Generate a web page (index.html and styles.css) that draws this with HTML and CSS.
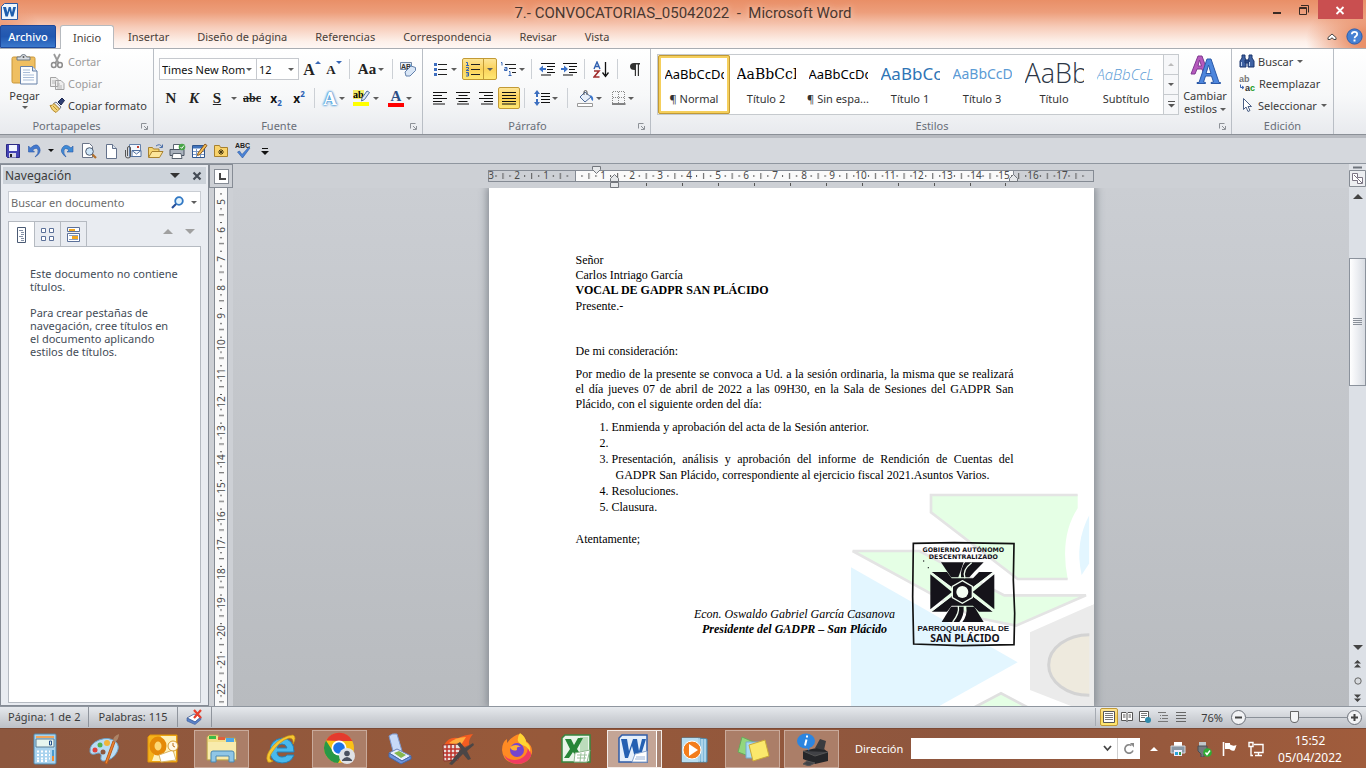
FILE: index.html
```html
<!DOCTYPE html>
<html lang="es">
<head>
<meta charset="utf-8">
<title>7.- CONVOCATORIAS_05042022 - Microsoft Word</title>
<link rel="stylesheet" href="styles.css">
</head>
<body>
<header class="frame">
  <div class="titlebar">
    <svg class="app-icon" width="17" height="17" viewBox="0 0 17 17"><path d="M3.500.5H16.500V16.500H.5V3.500z" fill="#eef6fd" stroke="#2a5ba5"/><path d="M2 4l2.500 9.500h2.300l1.700-6 1.600 6h2.300L15 4h-2.800l-1.200 5.500L9.800 4H7.700L6.400 9.500 5 4z" fill="#1f5fae"/></svg>
    <h1>7.- CONVOCATORIAS_05042022&nbsp; -&nbsp; Microsoft Word</h1>
    <div class="window-buttons">
      <button aria-label="Minimizar"><svg width="10" height="18"><path d="M1 11h8v2H1z" fill="#3a2b25"/></svg></button>
      <button aria-label="Restaurar"><svg width="12" height="18"><path d="M1.500 6.500h7v7h-7zM1 7.500h8M3 4.500h7.500v7" fill="none" stroke="#3a2b25"/></svg></button>
      <button class="close" aria-label="Cerrar"><svg width="10" height="18"><path d="M1.500 6l7 7M8.500 6l-7 7" stroke="#fff" stroke-width="1.800"/></svg></button>
    </div>
  </div>
  <nav class="tabs">
    <button class="file-tab">Archivo</button>
    <button class="active">Inicio</button>
    <button>Insertar</button>
    <button>Diseño de página</button>
    <button>Referencias</button>
    <button>Correspondencia</button>
    <button>Revisar</button>
    <button>Vista</button>
    <span class="tab-tools">
      <button aria-label="Minimizar la cinta"><svg width="10" height="8"><path d="M1 4.500L5 1l4 3.500v2H7L5 4.800 3 6.500H1z" fill="#fff" stroke="#444"/></svg></button>
      <button aria-label="Ayuda"><svg width="17" height="17"><circle cx="8.500" cy="8.500" r="7.600" fill="#4580d2" stroke="#2a5db0"/><path d="M5.800 6.200q.2-2.400 2.700-2.400t2.700 2.200q0 1.300-1.400 2.200-1.200.7-1.200 2" fill="none" stroke="#fff" stroke-width="1.800"/><path d="M7.500 11.500h2v2h-2z" fill="#fff"/></svg></button>
    </span>
  </nav>
</header>

<section class="ribbon" aria-label="Cinta de opciones">
  <div class="group clipboard">
    <div class="group-body">
      <button class="big paste"><svg width="27" height="31" viewBox="0 0 27 31"><rect x="1" y="3" width="23" height="26" rx="1.500" fill="#efbf62" stroke="#c99638"/><path d="M6 6V3h3.500q.5-2.500 3-2.500t3 2.500H19v3z" fill="#d9dde2" stroke="#6d7884"/><circle cx="12.500" cy="3" r="1" fill="#555"/><path d="M9.500 12.500h12l4.500 4.500v13H9.500z" fill="#fbfdff" stroke="#6781a8"/><path d="M21.500 12.500V17H26" fill="#dce6f2" stroke="#6781a8"/><path d="M12 16h7M12 18.500h7M12 21h11M12 23.500h11M12 26h11" stroke="#a9bdd8"/></svg><span>Pegar</span><i class="caret"></i></button>
      <div class="stack">
        <button class="line disabled"><svg width="16" height="16"><path d="M5 1l4.500 9M11 1L6.500 10" stroke="#9a9a9a" stroke-width="1.800"/><ellipse cx="4.800" cy="12" rx="2.300" ry="2.500" fill="none" stroke="#8c8c8c" stroke-width="1.500"/><ellipse cx="11" cy="12" rx="2.300" ry="2.500" fill="none" stroke="#8c8c8c" stroke-width="1.500"/></svg>Cortar</button>
        <button class="line disabled"><svg width="16" height="16"><path d="M1.500 2.500H7l2 2v7H1.500zM6.500 5.500H12l3 3v6H6.500z" fill="#eee" stroke="#a3a3a3"/><path d="M3 6h4M3 8h3M8 9h3M8 11h5M8 13h5" stroke="#b5b5b5"/></svg>Copiar</button>
        <button class="line"><svg width="16" height="16"><path d="M9 5l4-4 2.500 2.500L12 8z" fill="#2f3f73" stroke="#1c2850"/><path d="M7 5l5 5-1.500 2-6-5.500z" fill="#e9e9ee" stroke="#6d7586"/><path d="M5 6.500l5.500 5.500L7 15.500Q3 14 1 8.500 3.500 9 5 6.500z" fill="#f4d67c" stroke="#b68a2e"/><path d="M4 9l4 4" stroke="#b68a2e"/></svg>Copiar formato</button>
      </div>
    </div>
    <div class="group-label">Portapapeles<svg class="launcher" width="7" height="7"><path d="M.5 5.500v-5h5M3 3l3 3M6.500 3v3.500H3" fill="none" stroke="#8d9197"/></svg></div>
  </div>

  <div class="group font">
    <div class="group-body rows">
      <div class="row">
        <label class="combo family"><select aria-label="Fuente"><option>Times New Rom</option></select><i class="caret"></i></label>
        <label class="combo size"><select aria-label="Tamaño de fuente"><option>12</option></select><i class="caret"></i></label>
        <button class="w22 grow" aria-label="Aumentar fuente"><b class="serif big-a">A</b><i class="mark-up"></i></button>
        <button class="w22 grow" aria-label="Reducir fuente"><b class="serif small-a">A</b><i class="mark-down"></i></button>
        <i class="sep"></i>
        <button class="w34" aria-label="Cambiar mayúsculas"><b class="serif">Aa</b><i class="caret"></i></button>
        <i class="sep"></i>
        <button class="w22" aria-label="Borrar formato"><svg width="18" height="18"><path d="M1.500 2.500h11v7h-11z" fill="#e9eef5" stroke="#7489a8"/><text x="2" y="9" class="tiny-a">AB</text><path d="M6 12l6-6 4.500 1.500v3L11 16H7z" fill="#d9e6f6" stroke="#6280ab"/></svg></button>
      </div>
      <div class="row second">
        <button class="w22" aria-label="Negrita"><b class="serif">N</b></button>
        <button class="w24" aria-label="Cursiva"><b class="serif ital">K</b></button>
        <button class="w22" aria-label="Subrayado"><b class="serif under">S</b></button>
        <button class="w12" aria-label="Opciones de subrayado"><i class="caret"></i></button>
        <button class="w24" aria-label="Tachado"><b class="serif strike">abc</b></button>
        <button class="w24 tight" aria-label="Subíndice"><b class="script-x">x</b><span class="low">2</span></button>
        <button class="w22 tight" aria-label="Superíndice"><b class="script-x">x</b><span class="high">2</span></button>
        <i class="sep"></i>
        <button class="w30" aria-label="Efectos de texto"><b class="serif glow">A</b><i class="caret"></i></button>
        <button class="w34" aria-label="Resaltado"><svg width="18" height="18"><path d="M0 1h11v9H0z" fill="#f4ee67"/><text x="0" y="9" class="mark-ab">ab</text><path d="M9 9l5-7 2.500 1.500-5 7-3 1.500z" fill="#dbe7f5" stroke="#4f719f"/><path d="M0 13h16v4H0z" fill="#ff0"/></svg><i class="caret"></i></button>
        <button class="w34" aria-label="Color de fuente"><b class="serif font-color">A</b><i class="caret"></i></button>
      </div>
    </div>
    <div class="group-label">Fuente<svg class="launcher" width="7" height="7"><path d="M.5 5.500v-5h5M3 3l3 3M6.500 3v3.500H3" fill="none" stroke="#8d9197"/></svg></div>
  </div>

  <div class="group paragraph">
    <div class="group-body rows">
      <div class="row">
        <button class="w34" aria-label="Viñetas"><svg width="16" height="16"><path d="M5 3.500h9M5 8.500h9M5 13.500h9" stroke="#222"/><path d="M1 2h3v3H1zM1 7h3v3H1zM1 12h3v3H1z" fill="#3f6fc0"/></svg><i class="caret"></i></button>
        <span class="split on"><button aria-label="Numeración"><svg width="16" height="16"><path d="M6 3.500h9M6 8.500h9M6 13.500h9" stroke="#222"/><path d="M1 1.500h1.500v3M1 4.500h3M1 6.500h2.500v1.500L1 9.500h3M1 11.500h2.500v3.500H1M1.500 13h2" fill="none" stroke="#3565b5"/></svg></button><button aria-label="Opciones de numeración"><i class="caret"></i></button></span>
        <button class="w30" aria-label="Lista multinivel"><svg width="17" height="16"><path d="M5 3.500h11M9 7.500h7M12 11.500h4" stroke="#222"/><path d="M1 1.500h1v3M4.500 6.500h2.500v3H4.500v-1.500H7M9 10.500h1v4M8.500 14.500h3" fill="none" stroke="#3565b5"/></svg><i class="caret"></i></button>
        <i class="sep"></i>
        <button class="w22" aria-label="Disminuir sangría"><svg width="16" height="14"><path d="M2 1.500h14M8 4.500h8M8 7.500h6M8 10.500h8M2 13h10" stroke="#111" stroke-width="1.200"/><path d="M0 7l4-3.500v2.500h3v2H4v2.500z" fill="#3c72c8"/></svg></button>
        <button class="w22" aria-label="Aumentar sangría"><svg width="16" height="14"><path d="M2 1.500h14M8 4.500h8M8 7.500h6M8 10.500h8M2 13h10" stroke="#111" stroke-width="1.200"/><path d="M7 7L3 3.500v2.500H0v2h3v2.500z" fill="#3c72c8"/></svg></button>
        <i class="sep"></i>
        <button class="w24" aria-label="Ordenar"><svg width="16" height="17"><path d="M1 8L4 1l3 7M2 5.500h4" fill="none" stroke="#2f5fb0" stroke-width="1.400"/><path d="M1 10h5l-5 6h5.500" fill="none" stroke="#a02c2c" stroke-width="1.600"/><path d="M12.500 1v13M9.500 11.500l3 4 3-4" fill="none" stroke="#111" stroke-width="1.300"/></svg></button>
        <i class="sep"></i>
        <button class="w24" aria-label="Mostrar todo"><svg width="11" height="13"><path d="M5 0h6v1.500H10V13H8.800V1.500H7V13H5.800V7Q1 7 1 3.500T5 0z" fill="#333"/></svg></button>
      </div>
      <div class="row">
        <button class="w24" aria-label="Alinear a la izquierda"><svg width="14" height="14"><path d="M0 1.500h14M0 4.500h9M0 7.500h14M0 10.500h9M0 13h12" stroke="#111" stroke-width="1.200"/></svg></button>
        <button class="w22" aria-label="Centrar"><svg width="14" height="14"><path d="M0 1.500h14M2.500 4.500h9M0 7.500h14M2.500 10.500h9M1 13h12" stroke="#111" stroke-width="1.200"/></svg></button>
        <button class="w24" aria-label="Alinear a la derecha"><svg width="14" height="14"><path d="M0 1.500h14M5 4.500h9M0 7.500h14M5 10.500h9M2 13h12" stroke="#111" stroke-width="1.200"/></svg></button>
        <button class="w22 on" aria-label="Justificar"><svg width="14" height="14"><path d="M0 1.500h14M0 4.500h14M0 7.500h14M0 10.500h14M0 13h14" stroke="#111" stroke-width="1.200"/></svg></button>
        <i class="sep"></i>
        <button class="w34" aria-label="Interlineado"><svg width="16" height="16"><path d="M7 3.500h9M7 6.500h9M7 9.500h9M7 12.500h9" stroke="#111"/><path d="M3 0l3 4H4v8h2l-3 4-3-4h2V4H0z" fill="#3c6fc0"/><path d="M2 7h2v2H2z" fill="#fff"/></svg><i class="caret"></i></button>
        <i class="sep"></i>
        <button class="w34" aria-label="Sombreado"><svg width="17" height="17"><path d="M3 7l5-5 6 5-6 5z" fill="#e8f0fa" stroke="#4a6898"/><path d="M7 5V2q0-1.500 1.500-1.500T10 2v3" fill="none" stroke="#555"/><path d="M13 5q4 1 3 6-2-1-2.500-4z" fill="#3c78cf"/><path d="M.5 13.500h15v3H.5z" fill="#fff" stroke="#999"/></svg><i class="caret"></i></button>
        <button class="w34" aria-label="Bordes"><svg width="14" height="14"><path d="M.5 12V.5h12V12M6.500 1v11M1 6.500h12" fill="none" stroke="#888" stroke-dasharray="1 1"/><path d="M0 13h13.500" stroke="#111"/></svg><i class="caret"></i></button>
      </div>
    </div>
    <div class="group-label">Párrafo<svg class="launcher" width="7" height="7"><path d="M.5 5.500v-5h5M3 3l3 3M6.500 3v3.500H3" fill="none" stroke="#8d9197"/></svg></div>
  </div>

  <div class="group styles">
    <div class="group-body">
      <div class="gallery">
        <button class="style on"><span class="sample">AaBbCcDc</span><span>¶ Normal</span></button>
        <button class="style"><span class="sample t2">AaBbCcI</span><span>Título 2</span></button>
        <button class="style"><span class="sample">AaBbCcDc</span><span>¶ Sin espa...</span></button>
        <button class="style"><span class="sample t1">AaBbCc</span><span>Título 1</span></button>
        <button class="style"><span class="sample t3">AaBbCcD</span><span>Título 3</span></button>
        <button class="style"><span class="sample tt">AaBb</span><span>Título</span></button>
        <button class="style"><span class="sample st">AaBbCcL</span><span>Subtítulo</span></button>
        <div class="gallery-scroll">
          <button aria-label="Subir"><i class="caret up faint"></i></button>
          <button aria-label="Bajar"><i class="caret"></i></button>
          <button aria-label="Más"><svg width="7" height="7"><path d="M0 .5h7" stroke="#555"/><path d="M0 3h7L3.500 6.500z" fill="#555"/></svg></button>
        </div>
      </div>
      <button class="big change"><svg width="31" height="29" viewBox="0 0 31 29"><path d="M1 19L8 1h4l5 14-3 4-2-5H7l-2 5zM8 11h3.500L9.500 5z" fill="#b659bd" stroke="#7f3a90"/><path d="M7 27.500h2L17 4h4l8 23.500h1.500V28.500H21v-1l2.500-.5-2-6h-6l-2 6 2 .5v1H7zM16 18.500h5L18.500 10z" fill="#4d86dd" stroke="#2c5aa8"/></svg><span>Cambiar</span><span>estilos <i class="caret"></i></span></button>
    </div>
    <div class="group-label">Estilos<svg class="launcher" width="7" height="7"><path d="M.5 5.500v-5h5M3 3l3 3M6.500 3v3.500H3" fill="none" stroke="#8d9197"/></svg></div>
  </div>

  <div class="group editing">
    <div class="group-body stack">
      <button class="line"><svg width="16" height="16"><path d="M3 2h3v3l1 2v7H1V8l2-3zM10 2h3v3l2 3v6H9V7l1-2zM6 7h4v3H6z" fill="#3f62a3" stroke="#1d376e"/><path d="M2.500 9v4M10.500 9v4" stroke="#bcd2f2"/></svg>Buscar <i class="caret"></i></button>
      <button class="line"><svg width="17" height="17"><text x="0" y="7" class="rep-a">ab</text><text x="6" y="16" class="rep-b">a<tspan fill="#189a24">c</tspan></text><path d="M1.500 9.500v3h3M3 11l2 1.500L3 14" fill="none" stroke="#3a62ae"/></svg>Reemplazar</button>
      <button class="line"><svg width="16" height="16"><path d="M4.500 1.500v11l2.500-2.500 2 4.500 2-1-2-4h3.500z" fill="#fff" stroke="#4a5f86"/></svg>Seleccionar <i class="caret"></i></button>
    </div>
    <div class="group-label">Edición</div>
  </div>
</section>

<div class="quick-access">
  <button aria-label="Guardar"><svg width="16" height="16"><path d="M1.500 1.500h13v13h-12l-1-1z" fill="#4443b4" stroke="#2b2a85"/><path d="M4 2h8v6H4z" fill="#f2f6ff"/><path d="M4 10h7v4.500H4z" fill="#d7d7e8"/><path d="M5 11h2v3H5z" fill="#222"/></svg></button>
  <button aria-label="Deshacer"><svg width="16" height="16"><path d="M1.500 3v6h6L5.500 7Q10 3.500 11 7t-3 7q7-4 4.500-9.500T3.500 5z" fill="#4279cf" stroke="#2b59a7" stroke-width=".6"/></svg></button>
  <button class="w12" aria-label="Lista de deshacer"><i class="caret dark"></i></button>
  <button aria-label="Rehacer"><svg width="16" height="16"><path d="M14 3v6H8l2-2Q6 4 5 7t2 7Q0 9 3.500 4.500T12 5z" fill="#3d8bd6" stroke="#2b59a7" stroke-width=".6"/></svg></button>
  <button aria-label="Vista previa"><svg width="16" height="16"><path d="M1.500.5h7l3 3v11h-10z" fill="#fff" stroke="#6a7488"/><circle cx="8.500" cy="8.500" r="3.800" fill="#cfe6f8" stroke="#4c5a70"/><path d="M11.500 11.500l3.500 3.500" stroke="#b2702c" stroke-width="2.200"/></svg></button>
  <button aria-label="Nuevo"><svg width="16" height="16"><path d="M3.500 1.500h6l4 4v10h-10z" fill="#fff" stroke="#63718b"/><path d="M9.500 1.500v4h4" fill="#dbe3ee" stroke="#63718b"/></svg></button>
  <button aria-label="Enviar por correo"><svg width="18" height="16"><path d="M5.500 1.500h11v12h-11z" fill="#f2f7fd" stroke="#6480a8"/><path d="M8 7.500h9v6H8zM8 7.500l4.500 3.500L17 7.500" fill="#fff" stroke="#5272a0"/><path d="M3.500 13V5q0-1.500 1.500-1.500T6.500 5v8q0 2-2.500 2t-2.500-2V7" fill="none" stroke="#555"/><path d="M13 3h2v2h-2z" fill="#c43c2d"/></svg></button>
  <button aria-label="Abrir"><svg width="17" height="16"><path d="M1.500 14V4.500h4l1 1.500H12v3" fill="#f7d672" stroke="#a8812e"/><path d="M1.500 14.500L5 8.500h11l-3.500 6z" fill="#fce59a" stroke="#a8812e"/><path d="M9 3q4-3 6 1M15.500 1.500v3h-3" fill="none" stroke="#4a6ea9"/></svg></button>
  <button aria-label="Imprimir"><svg width="17" height="16"><path d="M4.500 6V1.500h7V6" fill="#fff" stroke="#5a6470"/><path d="M1 6.500h14v6H1z" fill="#aab2bd" stroke="#4b5563"/><path d="M4 10.500h8l1 5H3z" fill="#fff" stroke="#5a6470"/><circle cx="13" cy="4" r="3.300" fill="#47a447"/><path d="M11.500 4l1.200 1.400L15 2.500" fill="none" stroke="#fff"/></svg></button>
  <button aria-label="Dibujar tabla"><svg width="17" height="16"><path d="M1.500 2.500h12v12h-12z" fill="#fff" stroke="#2f568f"/><path d="M2 3h11v2.500H2z" fill="#3f72bb"/><path d="M2 8.500h11M2 11.500h11M5.500 6v8M9.500 6v8" stroke="#7899c7"/><path d="M7 10l7-9 2 1.500-7 9-2.500 1z" fill="#f4bf58" stroke="#8d5a20"/></svg></button>
  <button aria-label="Carpeta"><svg width="16" height="16"><path d="M1.500 13.500v-11h5l1 2h7v9z" fill="#f9d36b" stroke="#a8812e"/><path d="M8 6v6M5 9h6M6 7l4 4M10 7l-4 4" stroke="#4a3a12"/></svg></button>
  <button aria-label="Ortografía"><svg width="17" height="17"><text x="0" y="6" class="tiny-abc">ABC</text><path d="M2.500 10l2-1 2.500 3.500L14 5l1 1-7.500 10z" fill="#4a83d8" stroke="#28579f" stroke-width=".6"/></svg></button>
  <button aria-label="Personalizar"><svg width="8" height="8"><path d="M1 1.500h6" stroke="#111"/><path d="M0 4h8L4 8z" fill="#111"/></svg></button>
</div>

<main class="workspace">
  <aside class="nav-pane">
    <div class="pane-title"><h2>Navegación</h2><button aria-label="Opciones del panel"><i class="caret pane-caret"></i></button><button aria-label="Cerrar panel"><svg width="10" height="10"><path d="M1.500 1.500l7 7M8.500 1.500l-7 7" stroke="#444b55" stroke-width="2.200"/></svg></button></div>
    <div class="search"><input type="text" aria-label="Buscar en documento" placeholder="Buscar en documento"><button aria-label="Buscar"><svg width="13" height="13"><circle cx="8" cy="5" r="3.800" fill="#e3f3fc" stroke="#3178c4" stroke-width="1.800"/><path d="M5 8l-4 4" stroke="#264f9a" stroke-width="2.200"/></svg></button><button aria-label="Opciones de búsqueda"><i class="caret"></i></button></div>
    <div class="pane-tabs">
      <button class="active" aria-label="Títulos"><svg width="10" height="16"><path d="M.5.500h8v15h-8z" fill="#fff" stroke="#4a5a74"/><path d="M2 3.500h4M4 5.500h3M4 7.500h3M2 9.500h4M4 11.500h3M4 13.500h3" stroke="#8390a6"/></svg></button>
      <button aria-label="Páginas"><svg width="13" height="15"><path d="M.5 1.500h4v4h-4zM8.500 1.500h4v4h-4zM.5 9.500h4v4h-4zM8.500 9.500h4v4h-4z" fill="#fff" stroke="#5b7099"/></svg></button>
      <button aria-label="Resultados"><svg width="13" height="15"><path d="M.5.500h12v4H.5zM.5 6.500h12v8H.5z" fill="#fff" stroke="#5b7099"/><path d="M2 2h6v2H2zM5 9h6v3H5z" fill="#f2a51d"/><path d="M2 8.500h9M2 12.500h9" stroke="#8da0c0"/></svg></button>
      <span class="pane-arrows"><i class="tri-up"></i><i class="tri-down"></i></span>
    </div>
    <div class="pane-body">
      <p>Este documento no contiene títulos.</p>
      <p>Para crear pestañas de navegación, cree títulos en el documento aplicando estilos de títulos.</p>
    </div>
  </aside>

  <section class="editor">
    <div class="corner"><button aria-label="Tabulación"><svg width="13" height="13"><path d="M4 3h2v5h5v2H4z" fill="#444"/></svg></button></div>
    <div class="ruler-top">
      <svg width="607" height="24">
        <defs><pattern id="cm" x="86.500" y="0" width="28.650" height="24" patternUnits="userSpaceOnUse"><path d="M7 11h1v2H7zM21 11h1v2h-1zM14 9h1v6h-1z" fill="#555"/></pattern></defs>
        <rect x=".5" y="6.500" width="605" height="11" fill="#cdd0d5" stroke="#858b94"/>
        <rect x="87.500" y="6.500" width="438" height="11" fill="#fafafa" stroke="#858b94"/>
        <rect x="1" y="7" width="605" height="10" fill="url(#cm)"/>
        <g class="ruler-num"><text x="3" y="15">3</text><text x="29" y="15">2</text><text x="58" y="15">1</text><text x="115" y="15">1</text><text x="144" y="15">2</text><text x="172" y="15">3</text><text x="201" y="15">4</text><text x="230" y="15">5</text><text x="258" y="15">6</text><text x="287" y="15">7</text><text x="316" y="15">8</text><text x="344" y="15">9</text><text x="373" y="15">10</text><text x="402" y="15">11</text><text x="430" y="15">12</text><text x="459" y="15">13</text><text x="488" y="15">14</text><text x="516" y="15">15</text><text x="545" y="15">16</text><text x="574" y="15">17</text></g>
        <path d="M104.500 2.500h8v3l-4 4-4-4z" fill="#e6e8ea" stroke="#73777d"/>
        <path d="M122.500 17.500v-3l4-4 4 4v3zM122.500 18.500h8v5h-8z" fill="#e6e8ea" stroke="#73777d"/>
        <path d="M521.500 17.500v-3l4-4 4 4v3z" fill="#e6e8ea" stroke="#73777d"/>
        <path d="M158.500 19v3M194.500 19v3M230.500 19v3M266.500 19v3M302.500 19v3M338.500 19v3M374.500 19v3M410.500 19v3M446.500 19v3M482.500 19v3M517.500 19v3" stroke="#555"/>
      </svg>
    </div>
    <div class="scroll-head"><button aria-label="Dividir"><svg width="17" height="6"><path d="M4 3.500h9" stroke="#6e747c" stroke-width="2"/></svg></button><button aria-label="Regla"><svg width="17" height="17"><path d="M.5.500h16v16H.5z" fill="#eceef1" stroke="#868c95"/><path d="M3.500 3.500h5v4h5v6h-5v-3h-5zM5 5l8 8" fill="#fff" stroke="#7b7584"/></svg></button></div>
    <div class="ruler-left">
      <svg width="15" height="518">
        <defs><pattern id="cmv" x="0" y="-.5" width="15" height="28.650" patternUnits="userSpaceOnUse"><path d="M6 6h2v1H6zM6 21h2v1H6zM5 28h5v-1H5z" fill="#555"/></pattern></defs>
        <rect width="14" height="518" fill="#fafafa"/><rect width="14" height="518" fill="url(#cmv)"/>
        <path d="M.5 0v518M13.500 0v518" stroke="#858b94"/>
        <g class="ruler-num"><text transform="translate(11 14) rotate(-90)">5</text><text transform="translate(11 42) rotate(-90)">6</text><text transform="translate(11 71) rotate(-90)">7</text><text transform="translate(11 100) rotate(-90)">8</text><text transform="translate(11 128) rotate(-90)">9</text><text transform="translate(11 157) rotate(-90)">10</text><text transform="translate(11 186) rotate(-90)">11</text><text transform="translate(11 214) rotate(-90)">12</text><text transform="translate(11 243) rotate(-90)">13</text><text transform="translate(11 272) rotate(-90)">14</text><text transform="translate(11 300) rotate(-90)">15</text><text transform="translate(11 329) rotate(-90)">16</text><text transform="translate(11 357) rotate(-90)">17</text><text transform="translate(11 386) rotate(-90)">18</text><text transform="translate(11 415) rotate(-90)">19</text><text transform="translate(11 443) rotate(-90)">20</text><text transform="translate(11 472) rotate(-90)">21</text><text transform="translate(11 501) rotate(-90)">22</text></g>
      </svg>
    </div>
    <div class="canvas">
      <article class="page">
        <svg class="watermark" width="253" height="226" viewBox="0 0 759 678">
          <path d="M270 45H710V85Q655 170 680 297H530L270 97z" fill="#e5ffe5"/>
          <path d="M710 45H270V97L530 297H680" fill="none" stroke="#e4e4e4" stroke-width="8"/>
          <path d="M745 105Q700 190 722 285L745 250z" fill="#e3f6ff"/>
          <path d="M35 213H235L490 346H735L525 437 400 412z" fill="#e5ffe5" stroke="#e4e4e4" stroke-width="8"/>
          <path d="M30 262L530 547 295 678H30z" fill="#e3f6ff"/>
          <path d="M567 457L759 372V678H690L567 630z" fill="#ebebeb"/>
          <path d="M745 464A122 91 0 0 0 745 646z" fill="#eeeade"/>
          <path d="M745 464A122 91 0 0 0 745 646" fill="none" stroke="#d3d3d3" stroke-width="9"/>
          <path d="M400 682L480 640 560 682z" fill="#e5ffe5" stroke="#e0e0e0" stroke-width="8"/>
          <path d="M745 0H759V372L745 378z" fill="#fff"/>
          <path d="M217 190L340 188 519 191 517 300 521 400 519 494 360 497 218 492 215 350z" fill="none" stroke="#111" stroke-width="5"/>
          <g class="stamp-text"><text x="367" y="217">GOBIERNO AUTÓNOMO</text><text x="367" y="237">DESCENTRALIZADO</text><text x="367" y="452" class="stamp-mid">PARROQUIA RURAL DE</text><text x="372" y="486" class="stamp-big">SAN PLÁCIDO</text></g>
          <g fill="#15131a"><path d="M300 247H368L352 292H330z"/><path d="M372 247H428L400 275 385 292H360Q358 265 372 247z"/><path d="M268 283L333 336 268 388z"/><path d="M460 283L395 336 460 388z"/><path d="M272 276H318L332 295H396L414 276H455L393 324 364 302 334 324z"/><path d="M272 395H318L332 377H396L414 395H455L393 347 364 370 334 347z"/><path d="M302 426L330 380H368Q370 405 355 426z"/><path d="M364 426Q380 405 376 380H400L428 426z"/><circle cx="262" cy="263" r="2"/><circle cx="248" cy="243" r="2"/></g>
          <path d="M364 302L394 319V353L364 370 334 353V319z" fill="#15131a" stroke="#eefbee" stroke-width="4"/><circle cx="364" cy="336" r="18" fill="#f5fff5"/>
          <path d="M372 295Q362 270 392 248M352 378Q356 400 335 426M272 279L330 322M457 279L398 322M272 393L330 349M457 393L398 349" fill="none" stroke="#eefbee" stroke-width="4"/>
        </svg>
        <p>Señor<br>Carlos Intriago García<br><b>VOCAL DE GADPR SAN PLÁCIDO</b></p>
        <p class="present">Presente.-</p>
        <p class="greeting">De mi consideración:</p>
        <p class="body-text">Por medio de la presente se convoca a Ud. a la sesión ordinaria, la misma que se realizará el día jueves 07 de abril de 2022 a las 09H30, en la Sala de Sesiones del GADPR San Plácido, con el siguiente orden del día:</p>
        <ol>
          <li>Enmienda y aprobación del acta de la Sesión anterior.</li>
          <li></li>
          <li><span class="full">Presentación, análisis y aprobación del informe de Rendición de Cuentas del</span><span class="hang">GADPR San Plácido, correspondiente al ejercicio fiscal 2021.Asuntos Varios.</span></li>
          <li>Resoluciones.</li>
          <li>Clausura.</li>
        </ol>
        <p class="closing">Atentamente;</p>
        <p class="signature">Econ. Oswaldo Gabriel García Casanova<br><b>Presidente del GADPR – San Plácido</b></p>
      </article>
    </div>
    <div class="scrollbar">
      <button aria-label="Arriba"><i class="tri-up dark"></i></button>
      <div class="track"><div class="thumb"><svg width="9" height="8"><path d="M0 .5h9M0 2.500h9M0 4.500h9M0 6.500h9" stroke="#8a9099"/></svg></div></div>
      <button aria-label="Abajo"><i class="tri-down dark"></i></button>
      <button class="browse" aria-label="Página anterior"><svg width="7" height="8"><path d="M0 3.500L3.500 0 7 3.500zM0 7.500L3.500 4 7 7.500z" fill="#444"/></svg></button>
      <button class="browse" aria-label="Seleccionar objeto"><svg width="8" height="8"><circle cx="4" cy="4" r="3.200" fill="#d7dade" stroke="#666"/></svg></button>
      <button class="browse" aria-label="Página siguiente"><svg width="7" height="8"><path d="M0 .5L3.500 4 7 .5zM0 4.500L3.500 8 7 4.500z" fill="#444"/></svg></button>
    </div>
  </section>
</main>

<footer class="statusbar">
  <span class="cell">Página: 1 de 2</span><span class="cell">Palabras: 115</span>
  <span class="cell proof"><svg width="17" height="16"><path d="M1 9l7-4 7 3-6 5z" fill="#fff" stroke="#5c74a5"/><path d="M1 9v3l8 3.500 6-5V8l-6 5z" fill="#5b83ca" stroke="#3a5a98" stroke-width=".6"/><path d="M8 1l7 8M15 1L8 9" stroke="#e8402c" stroke-width="2.200"/></svg></span>
  <span class="views">
    <button class="on" aria-label="Diseño de impresión"><svg width="12" height="12"><path d="M.5.500h11v11H.5z" fill="#fff" stroke="#555"/><path d="M2 2.500h8M2 4.500h8M2 6.500h8M2 8.500h8" stroke="#777"/></svg></button>
    <button aria-label="Lectura"><svg width="12" height="12"><path d="M.5 1.500H5L6 2.500l1-1h4.500v8H7l-1 1-1-1H.5zM6 2.500v8M2 4h2.500M2 6h2.500M7.500 4H10M7.500 6H10" fill="#fff" stroke="#555"/></svg></button>
    <button aria-label="Diseño web"><svg width="12" height="12"><path d="M.5.500h9v10h-9z" fill="#fff" stroke="#555"/><path d="M2 2.500h6M2 4.500h6M2 6.500h4" stroke="#777"/><circle cx="9" cy="9" r="3" fill="#2e8aaa"/></svg></button>
    <button aria-label="Esquema"><svg width="12" height="12"><path d="M1 1.500h8M3 4.500h1M5 4.500h6M3 7.500h1M5 7.500h6M1 10.500h10" stroke="#777"/></svg></button>
    <button aria-label="Borrador"><svg width="12" height="12"><path d="M1 1.500h10M1 4.500h10M1 7.500h10M1 10.500h10" stroke="#666"/></svg></button>
  </span>
  <span class="zoom-value">76%</span>
  <button class="round" aria-label="Alejar"><svg width="9" height="9"><path d="M1 4.500h7" stroke="#444" stroke-width="2"/></svg></button>
  <input class="zoom" type="range" min="0" max="160" value="76" aria-label="Zoom">
  <button class="round" aria-label="Acercar"><svg width="9" height="9"><path d="M1 4.500h7M4.500 1v7" stroke="#444" stroke-width="2"/></svg></button>
</footer>

<div class="taskbar">
  <div class="apps">
    <button aria-label="Calculadora"><svg width="32" height="32"><rect x="5" y="1" width="22" height="30" rx="1" fill="#a9d3ee" stroke="#4f89ae"/><path d="M7 3h18v2H7z" fill="#f1a55a"/><path d="M7 6h18v8H7z" fill="#e7f5ef" stroke="#5b7f96"/><path d="M20.500 8h2v4h-2z" fill="none" stroke="#234f8c"/><path d="M8 18.500h13M8 22h13M8 25.500h13M8 28h10" stroke="#fff" stroke-width="2" stroke-dasharray="2 2"/><path d="M23 17h2v8h-2z" fill="#4d9acb"/><path d="M23 23h2v5h-2z" fill="#f28c30"/></svg></button>
    <button aria-label="Paint"><svg width="32" height="32"><path d="M2 19Q1 11 11 7T28 9q4 4 1 10-4 8-13 9-4 0-3-4t-3-4q-7 3-8-1z" fill="#b9dcf4" stroke="#6da2c8"/><circle cx="7" cy="17" r="2.500" fill="#e0423a"/><circle cx="12" cy="12" r="2.500" fill="#52b152"/><circle cx="19" cy="10" r="3" fill="#f2b53a"/><circle cx="15" cy="19" r="2.500" fill="#8d573e"/><path d="M17 30L25 8l2 1-8 22z" fill="#f08431" stroke="#b95c1d"/><path d="M25 8q0-5 6-7 0 5-4 8z" fill="#ad8467"/></svg></button>
    <button aria-label="Outlook"><svg width="32" height="32"><path d="M3 2h27v27H1V4z" fill="#f5b31d" stroke="#e29408"/><path d="M14 3h15v25H5z" fill="#fff1b9"/><ellipse cx="11" cy="13" rx="6" ry="7" fill="#fdd774" stroke="#e58a08" stroke-width="5"/><path d="M12 22l14-5 3 10-15 2z" fill="#fff" stroke="#d8b565"/><circle cx="26" cy="13" r="5" fill="#fff8e6" stroke="#d59b2c"/><path d="M26 10v3l2 1" fill="none" stroke="#b9701a"/></svg></button>
    <button class="open" aria-label="Explorador"><svg width="34" height="34"><path d="M2 28V5l2-2h9l1 3h16l1 3v19z" fill="#f3df8b" stroke="#b59f4d"/><path d="M4 4h7v3H4z" fill="#3bbb45"/><path d="M13 5h7v3h-7z" fill="#e2603a"/><path d="M21 6h8v4h-8z" fill="#4ea7e6"/><path d="M3 10h28v17H3z" fill="#f8ebac"/><path d="M6 30V21q0-2 2-2h19q2 0 2 2v9h-5v-6H11v6z" fill="#8fc6e6" stroke="#4b88b0"/></svg></button>
    <button aria-label="Internet Explorer"><svg width="32" height="32"><path d="M29 19H12q0 5 5 5 4 0 5-2h7q-3 8-12 8Q5 29 5 18T17 5q12 1 12 14zM12 15h10q-1-4-5-4t-5 4z" fill="#49b9ed" stroke="#2382bb"/><path d="M3 29Q-1 23 8 13T28 2q4 2 0 9 1-6-4-6Q14 8 6 21q-3 6 2 7-3 2-5 1z" fill="#f6c733" stroke="#cc9512" stroke-width=".7"/></svg></button>
    <button class="open" aria-label="Chrome"><svg width="34" height="34" viewBox="0 0 34 34"><circle cx="16" cy="16" r="15" fill="#fbc116"/><path d="M3 8.500A15 15 0 0 1 29.500 9H16z" fill="#e33b2e"/><path d="M3 8.500A15 15 0 0 0 15 31l7-12-12 .5z" fill="#279847"/><circle cx="16" cy="16" r="7.500" fill="#fff"/><circle cx="16" cy="16" r="5.800" fill="#1d73e8"/><circle cx="24" cy="24" r="8" fill="#dfe2e7"/><circle cx="24" cy="21.500" r="2.800" fill="#4b5260"/><path d="M19 28q5-6 10 0v1H19z" fill="#4b5260"/></svg></button>
    <button aria-label="Escáner"><svg width="32" height="32"><path d="M10 18L6 3q3-3 8-2l5 17-6 4z" fill="#c7d9f7" stroke="#7d97cc"/><path d="M6 20l8-4 14 7-9 5z" fill="#e8efff" stroke="#6883bd"/><path d="M6 20v4l12 7 10-5v-3l-9 5z" fill="#6e94dc" stroke="#4668a8"/><path d="M11 20l5-2 7 4-5 3z" fill="#85b74e"/></svg></button>
    <button aria-label="Grabadora"><svg width="34" height="32"><path d="M3 12Q8 3 17 5q6-3 15-4-5 6-4 11l-8 3H3z" fill="#f35c21"/><path d="M8 10q7-6 17-6l-5 8z" fill="#ffab3d"/><path d="M2 12l18-1-3 16-14 1z" fill="#e9e0dd" stroke="#8e2d25"/><path d="M6 12v15M10 12v15M14 12v15M3 16h16M3 20h16M3 24h15" stroke="#bd3029" stroke-width="1.500"/><path d="M8 31l12-15-4-5 3-2 5 6 8-5 1 2-7 6 4 8-3 1-5-6L11 32z" fill="#4b4646"/></svg></button>
    <button aria-label="Firefox"><svg width="32" height="32"><path d="M16 31Q2 30 1 17 1 9 6 6v4q6-8 13-9 4 2 6 7 7 5 6 12-3 11-15 11z" fill="#ff8a23"/><path d="M3 22q6 7 16 4 7-3 8-11 3 3 3 8-4 8-14 8Q6 30 3 22z" fill="#ef3b62"/><path d="M19 0q6 4 6 9 5 3 4 10-3-7-9-7-6-5-1-12z" fill="#ffd534"/><circle cx="16" cy="17" r="7" fill="#7545cf"/><path d="M9 14q6-4 11 0-5-1-4 3-5 2-7-3z" fill="#ffb130"/></svg></button>
    <button aria-label="Excel"><svg width="32" height="32"><path d="M5 2h25v27H2V5z" fill="#e9f5e9" stroke="#38873f" stroke-width="1.500"/><path d="M20 4h8v20h-8z" fill="#bcdcbc"/><path d="M5 6h6l3 6 4-7h5l-6 11 6 9h-6l-4-6-4 6H4l6-9z" fill="#278638"/><path d="M15 20l15-3-3 12H14z" fill="#fff" stroke="#90b890"/><path d="M17 22h10M17 25h9M21 20l-1 9M25 19l-1 9" stroke="#9bc29b"/></svg></button>
    <button class="open current" aria-label="Word"><svg width="32" height="32"><path d="M5 2h25v27H2V5z" fill="#e4effb" stroke="#2f5ca8" stroke-width="1.500"/><path d="M4 6h6l2 12 4-12h4l2 12 3-12h4l-6 19h-5l-3-12-4 12H8z" fill="#2460b2"/><path d="M18 21l12-3v11H15z" fill="#fff" stroke="#87a3cc"/><path d="M19 24h9M18 26h10" stroke="#9ab4d9"/></svg></button>
    <button aria-label="Reproductor"><svg width="32" height="32"><path d="M4 5h17l8 1v23H4z" fill="#82b9da" stroke="#4d8cae"/><path d="M21 5v24M24 6v23M27 6v23" stroke="#d5edf9"/><path d="M4 5h16v24H4z" fill="#b7ddf1"/><circle cx="14" cy="17" r="9" fill="#f37d1c" stroke="#fff"/><path d="M11 11l9 6-9 6z" fill="#fff"/></svg></button>
    <button class="open" aria-label="Notas"><svg width="34" height="30"><path d="M6 3l14 6-5 14-13-5z" fill="#92d77e" stroke="#69a95b"/><path d="M10 8h14v16H10z" fill="#a6daf4" stroke="#76aac9"/><path d="M13 11l16-5 4 16-16 5z" fill="#fbe86c" stroke="#caaa38"/></svg></button>
    <button class="open" aria-label="Impresora"><svg width="34" height="34"><path d="M8 19l18-4 7 5v9l-13 3-12-5z" fill="#252629"/><path d="M20 16l5-9 6 2-2 9z" fill="#3a3b3f"/><path d="M8 19l12 5 13-4M12 29l-4 3 6 2 6-3z" fill="#414246" stroke="#555"/><ellipse cx="11" cy="9" rx="9" ry="7.500" fill="#2c85e0"/><path d="M11 14l3 5 1-6z" fill="#2c85e0"/><path d="M11.500 7.500l-1.500 6M12 3.500v2" stroke="#fff" stroke-width="2"/></svg></button>
  </div>
  <div class="address"><label for="addr">Dirección</label><div class="address-box"><input id="addr" type="text"><svg width="9" height="7"><path d="M1 1l3.500 4L8 1" fill="none" stroke="#444" stroke-width="1.800"/></svg><button aria-label="Actualizar"><svg width="12" height="12"><path d="M10 7.500A4.200 4.200 0 1 1 8.500 2.500" fill="none" stroke="#888" stroke-width="1.700"/><path d="M7 0h4v4.500z" fill="#888"/></svg></button></div></div>
  <div class="tray">
    <button aria-label="Mostrar iconos ocultos"><svg width="8" height="6"><path d="M0 5l4-4 4 4z" fill="#fff"/></svg></button>
    <button aria-label="Impresora"><svg width="16" height="16"><path d="M4 1h8v5H4z" fill="#fff"/><path d="M1 5h14v7H1z" fill="#8b98a5" stroke="#d3d9df"/><path d="M4 9h8v6H4z" fill="#eef"/><path d="M5 11h3v3H5z" fill="#2aa5d9"/><path d="M9 11h2v3H9z" fill="#3a9b42"/></svg></button>
    <button aria-label="USB"><svg width="16" height="16"><path d="M3 1h7v5H3z" fill="#c0c6ca"/><path d="M2 5h9v5l-3 3v3H5v-3l-3-3z" fill="#73797e" stroke="#4a4e52"/><circle cx="11.500" cy="11.500" r="4.300" fill="#2fae34"/><path d="M9.500 11.500l1.500 2 3-4" fill="none" stroke="#fff" stroke-width="1.400"/></svg></button>
    <button aria-label="Centro de actividades"><svg width="16" height="16"><path d="M1.500 1v14" stroke="#fff" stroke-width="1.600"/><path d="M3 2h5v1.500q3 2 6.500.5-1 3.500-2 5.500-3 1-5-1.500H3z" fill="#fff"/></svg></button>
    <button aria-label="Red"><svg width="16" height="16"><path d="M6 3.500h9v8H6M10.500 12v2.500M7 14.500h7M1 1.500h4v4H1zM3 6v8.500h2" fill="none" stroke="#fff" stroke-width="1.400"/></svg></button>
  </div>
  <div class="clock"><time>15:52</time><time>05/04/2022</time></div>
</div>
</body>
</html>
```
FILE: styles.css
```css
* { box-sizing: border-box; }
body {
  margin: 0;
  height: 100vh;
  display: flex;
  flex-direction: column;
  overflow: hidden;
  background: #c3c6cb;
  color: #3b3b3b;
  font: 11px/13px "Noto Sans", "Open Sans", sans-serif;
}
button {
  display: inline-flex;
  align-items: center;
  justify-content: center;
  margin: 0;
  padding: 0;
  border: 0;
  background: none;
  color: inherit;
  font: inherit;
  white-space: nowrap;
}
h1, h2, p { margin: 0; font-weight: 400; }
svg { flex: none; }
.serif { font-family: "Liberation Serif", serif; font-size: 15px; color: #222; }

.caret { width: 0; height: 0; flex: none; border: 3px solid transparent; border-top-color: #5d5d5d; border-bottom: 0; }
.caret.up { border-top: 0; border-bottom: 3px solid #777; }
.caret.faint { border-bottom-color: #bbb; }
.caret.dark { border-top-color: #111; }
.caret.pane-caret { border-width: 5px 5px 0; border-top-color: #333; }
.tri-up, .tri-down { width: 0; height: 0; border: 5px solid transparent; }
.tri-up { border-top: 0; border-bottom-color: #a0a0a0; }
.tri-down { border-bottom: 0; border-top-color: #a0a0a0; }
.tri-up.dark { border-bottom-color: #444; }
.tri-down.dark { border-top-color: #444; }

/* Window frame and ribbon tabs */
.frame {
  flex: none;
  background:
    radial-gradient(ellipse 60px 40px at 100% 80%, #e9916a 20%, transparent),
    radial-gradient(ellipse 40px 30px at 0 60%, #ec9a76 10%, transparent),
    linear-gradient(#e98f67, #ed9e7b 25%, #f7ccb9 55%, #fdf0ea 85%, #fff8f5);
}
.titlebar { display: flex; align-items: center; justify-content: space-between; height: 25px; }
.app-icon { margin: 0 76px 2px 1px; }
.titlebar h1 { font: 15px/24px Roboto, "Open Sans", sans-serif; color: #4a372f; text-shadow: 0 0 6px #fbdccd; }
.window-buttons { display: flex; align-self: flex-start; padding-right: 3px; gap: 16px; }
.window-buttons .close { width: 45px; height: 19px; margin-left: -8px; background: #c94f50; }
.tabs { display: flex; height: 24px; border-bottom: 1px solid #a9adb3; color: #4a3f3a; }
.tabs > button { padding: 0 14px; height: 23px; }
.tabs .file-tab { width: 56px; padding: 0; margin-right: 4px; background: linear-gradient(#2c5fb4, #2157b0 50%, #3b79cd); border: 1px solid #1d489b; border-radius: 2px 2px 0 0; color: #fff; font-weight: 500; }
.tabs .active { height: 24px; width: 54px; padding: 0; background: #fff; border: 1px solid #b6babf; border-bottom: 0; border-radius: 3px 3px 0 0; }
.tab-tools { display: flex; align-items: center; gap: 9px; margin-left: auto; padding-right: 3px; }

/* Ribbon */
.ribbon { display: flex; flex: none; height: 86px; background: linear-gradient(#fff, #f7f8f9 55%, #e8eaee); border-bottom: 1px solid #8b9097; }
.group { display: flex; flex-direction: column; flex: none; border-right: 1px solid #b9bec5; }
.group-body { display: flex; flex: 1; }
.group-label { display: flex; align-items: center; justify-content: center; height: 16px; margin-bottom: 1px; color: #696e78; position: relative; }
.launcher { position: absolute; right: 5px; bottom: 3px; }
.clipboard { width: 154px; }
.clipboard .group-label { padding-right: 20px; }
.font { width: 269px; }
.font .group-label { padding-right: 18px; }
.paragraph { width: 228px; }
.paragraph .group-label { padding-right: 18px; }
.styles { width: 581px; }
.styles .group-label { padding-right: 18px; }
.editing { width: 102px; }
.big { flex-direction: column; justify-content: flex-start; }
.paste { width: 49px; padding-top: 5px; gap: 4px; }
.stack { display: flex; flex-direction: column; align-items: flex-start; padding-top: 1px; }
.line { height: 22px; gap: 4px; }
.line svg { margin-right: -1px; }
.disabled { color: #9b9b9b; }
.rows { flex-direction: column; padding: 8px 0 0 5px; gap: 5px; }
.row { display: flex; align-items: center; height: 24px; }
.row.second { padding-left: 1px; }
.row button { height: 22px; gap: 2px; }
.row .tight { gap: 0; }
.w12 { width: 12px; }
.w22 { width: 22px; }
.w24 { width: 24px; }
.w30 { width: 30px; }
.w34 { width: 34px; }
.sep { width: 1px; height: 20px; margin: 0 4px; background: #ccd0d5; }
.combo { display: grid; align-items: center; height: 22px; background: #fff; border: 1px solid #c6c9ce; }
.combo select { grid-area: 1 / 1; appearance: none; border: 0; padding: 0 2px; background: none; font: inherit; color: #111; }
.combo .caret { grid-area: 1 / 1; justify-self: end; margin-right: 4px; }
.family { width: 98px; }
.size { width: 43px; margin-left: -1px; margin-right: 2px; }
.big-a { font-size: 16px; }
.small-a { font-size: 13px; }
.row .grow { gap: 0; }
.mark-up, .mark-down { align-self: flex-start; margin-top: 3px; border: 3px solid transparent; }
.mark-up { border-top: 0; border-bottom-color: #3767b5; }
.mark-down { border-bottom: 0; border-top-color: #3767b5; }
.ital { font-style: italic; }
.under { text-decoration: underline; }
.strike { font-size: 12px; text-decoration: line-through; }
.script-x { font-size: 12px; color: #111; }
.low, .high { font-size: 8px; color: #2b5fb5; font-weight: 700; line-height: 8px; }
.low { margin-top: 10px; }
.high { margin-bottom: 8px; }
.glow { font-size: 19px; color: #fff; text-shadow: 0 0 2px #3d92d6, 0 0 2px #3d92d6, 0 0 3px #3d92d6; }
.font-color { width: 16px; color: #2d4f86; line-height: 14px; border-bottom: 4px solid #f00; }
.tiny-a { font: bold 7px "Liberation Sans", sans-serif; fill: #333; }
.mark-ab { font: bold 10px "Liberation Serif", serif; }
.on { background: linear-gradient(#fde596, #fbd25b 50%, #ffe873); border: 1px solid #c29a35; border-radius: 2px; }
.split { display: flex; width: 35px; height: 22px; }
.row .split button { height: 20px; flex: 1; }
.row .split button:first-child { width: 21px; flex: none; border-right: 1px solid #c29a35; }

.gallery { display: flex; height: 61px; margin: 5px 0 0 6px; width: 522px; border: 1px solid #c6cace; background: #fff; }
.style { flex-direction: column; justify-content: flex-end; width: 72px; flex: none; gap: 4px; padding: 0 5px 9px; overflow: hidden; color: #333; }
.style.on { background: #fff; border: 3px solid #f5cf5c; outline: 1px solid #c29a35; outline-offset: -1px; padding: 0 2px 6px; }
.sample { width: 59px; overflow: hidden; text-align: left; font-size: 13px; line-height: 28px; height: 28px; color: #000; }
.sample.t1 { font-size: 17px; color: #2e74b5; }
.sample.t2 { font: 14px/28px "DejaVu Serif", serif; }
.sample.t3 { font-size: 14px; color: #5b9bd5; }
.sample.tt { font: 300 27px/26px "Open Sans", sans-serif; color: #2c3646; }
.sample.st { font: italic 300 15px/28px "Open Sans", sans-serif; color: #5b9bd5; }
.gallery-scroll { display: flex; flex-direction: column; margin-left: auto; width: 15px; border-left: 1px solid #c6cace; }
.gallery-scroll button { flex: 1; background: #f6f7f9; }
.gallery-scroll button + button { border-top: 1px solid #c6cace; }
.change { flex: 1; padding-top: 6px; gap: 0; }
.change svg { margin-bottom: 5px; }
.change .caret { display: inline-block; margin-bottom: 2px; }
.editing .stack { padding-left: 7px; }
.rep-a { font: bold 9px "Liberation Sans", sans-serif; fill: #777; }
.rep-b { font: bold 9px "Liberation Sans", sans-serif; fill: #333; }

/* Quick access */
.quick-access { display: flex; align-items: center; flex: none; height: 29px; padding: 0 0 0 2px; background: #d5d8dd; border-top: 3px solid #b7bac0; border-bottom: 1px solid #8f969f; }
.quick-access button { width: 22px; height: 22px; }
.quick-access .w12 { width: 10px; }
.tiny-abc { font: bold 7px "Liberation Sans", sans-serif; fill: #222; }

/* Navigation pane */
.workspace { display: flex; flex: 1; min-height: 0; }
.nav-pane { display: flex; flex-direction: column; flex: none; width: 209px; padding: 2px; background: #e9ecf1; border: 1px solid #868c95; }
.pane-title { display: flex; align-items: center; height: 17px; background: #cdd3da; padding: 0 4px 0 2px; gap: 12px; }
.pane-title h2 { flex: 1; font-size: 12px; line-height: 16px; }
.search { display: flex; align-items: center; height: 22px; margin: 7px 5px 0 5px; padding-right: 3px; gap: 7px; background: #fff; border: 1px solid #c9cdd3; }
.search input { flex: 1; min-width: 0; border: 0; padding: 0 2px; font: inherit; background: none; }
.search input::placeholder { color: #6c6c6c; opacity: 1; }
.pane-tabs { display: flex; height: 25px; margin: 8px 5px 0 5px; }
.pane-tabs button { width: 27px; border: 1px solid #b5bac1; border-bottom: 0; margin-right: -1px; }
.pane-tabs .active { background: #fff; height: 26px; z-index: 1; }
.pane-arrows { display: flex; gap: 12px; margin: 8px 6px 0 auto; }
.pane-body { flex: 1; margin: 0 5px 0 5px; padding: 20px 20px 0 21px; background: #fff; border: 1px solid #b5bac1; color: #444c57; }
.pane-body p { margin-bottom: 13px; }

/* Editor */
.editor { flex: 1; min-width: 0; display: grid; grid-template: 24px minmax(0, 1fr) / 24px minmax(0, 1fr) 17px; background: #cdd0d5; }
.corner { border: 1px solid #868c95; padding: 4px; }
.corner button { width: 15px; height: 15px; background: #fff; border: 1px solid #868c95; }
.ruler-top { display: flex; justify-content: center; }
.ruler-num { font: 10px "Noto Sans", sans-serif; fill: #4a4a4a; text-anchor: middle; }
.ruler-left { padding-left: 5px; overflow: hidden; }
.canvas { overflow: hidden; background: linear-gradient(#cbced3, #b8bbbf); }
.page {
  position: relative;
  width: 605px;
  max-width: 100%;
  min-height: 100%;
  margin: 0 auto;
  padding: 65px 80px 0 87px;
  background: #fff;
  box-shadow: 0 0 8px 2px #858b92;
  color: #000;
  font: 12px/15px "Liberation Serif", "Times New Roman", serif;
}
.page > * { position: relative; }
.page .watermark { position: absolute; right: 0; top: 292px; }
.present { margin-top: 1px; }
.greeting { margin-top: 30px; }
.body-text { margin-top: 8px; text-align: justify; }
.page ol { margin: 7px 0 0; padding-left: 36px; line-height: 16px; list-style-position: outside; }
.page li { min-height: 16px; }
.full { display: block; text-align: justify; text-align-last: justify; }
.hang { display: block; padding-left: 4px; }
.closing { margin-top: 17px; }
.signature { margin-top: 60px; text-align: center; font-style: italic; }
.stamp-text { font: bold 19px "DejaVu Sans", sans-serif; fill: #15131a; text-anchor: middle; }
.stamp-mid { font: bold 24px "Liberation Sans", sans-serif; }
.stamp-big { font: bold 31px "Noto Sans", sans-serif; }

.scroll-head { display: flex; flex-direction: column; background: #dfe2e7; }
.scrollbar { display: flex; flex-direction: column; background: #dce0e6; }
.scrollbar > button { height: 16px; }
.track { flex: 1; padding-top: 54px; }
.thumb { display: flex; align-items: center; justify-content: center; height: 128px; border: 1px solid #8b929c; background: linear-gradient(90deg, #fff, #eceef2 50%, #d8dce2); }
.scrollbar .browse { height: 17px; }

/* Status bar */
.statusbar { display: flex; align-items: center; flex: none; height: 22px; padding: 0 4px 1px 0; background: linear-gradient(#e6e9ed, #d0d3d8 50%, #bdc0c6); border-top: 1px solid #8f969f; }
.cell { padding: 0 8px; line-height: 20px; border-right: 1px solid #8f949c; }
.cell + .cell { padding: 0 9px; }
.cell.proof { display: flex; align-items: center; padding: 0 8px; height: 20px; }
.views { display: flex; margin-left: auto; border-left: 1px solid #a6abb2; padding-left: 4px; }
.views button { width: 18px; height: 18px; }
.zoom-value { padding: 0 8px 0 11px; }
.round { width: 15px; height: 15px; border: 1px solid #6b7078; border-radius: 50%; background: #f2f3f5; }
.zoom {
  appearance: none;
  width: 101px;
  height: 16px;
  margin: 0;
  background:
    linear-gradient(#8a9098, #8a9098) center / 100% 1px no-repeat,
    linear-gradient(#8a9098, #8a9098) center / 1px 7px no-repeat;
}
.zoom::-webkit-slider-thumb { appearance: none; width: 9px; height: 12px; margin-right: 12px; border: 1px solid #666; border-radius: 1px 1px 5px 5px; background: #f5f6f7; }

/* Taskbar */
.taskbar { display: flex; align-items: center; flex: none; height: 40px; background: linear-gradient(90deg, #8d573e, #97593a 40%, #8e563e 70%, #a05c3c); border-top: 1px solid #7c4a35; color: #fff; }
.apps { display: flex; gap: 4px; margin-left: 17px; height: 38px; }
.apps button { width: 55px; border: 1px solid transparent; }
.apps .open { background: #ab7e68; border-color: #c9aa9b; }
.apps .current { background: #c4a596; border-color: #f3ebe7; box-shadow: inset -4px 0 0 #a88473, inset -5px 0 0 #fff; padding-right: 4px; }
.address { display: flex; align-items: center; flex: 1; margin-left: 16px; gap: 8px; }
.address-box { display: flex; align-items: center; flex: 1; height: 21px; background: #fff; }
.address-box input { flex: 1; min-width: 0; border: 0; background: none; }
.address-box button { width: 23px; height: 21px; margin-left: 5px; border-left: 1px solid #d0d0d0; }
.tray { display: flex; align-items: center; margin: 0 12px 0 8px; gap: 9px; }
.tray button:first-child { width: 12px; }
.tray button { width: 17px; }
.clock { display: flex; flex-direction: column; align-items: center; width: 68px; margin-right: 22px; font-size: 12px; line-height: 17px; }
```
